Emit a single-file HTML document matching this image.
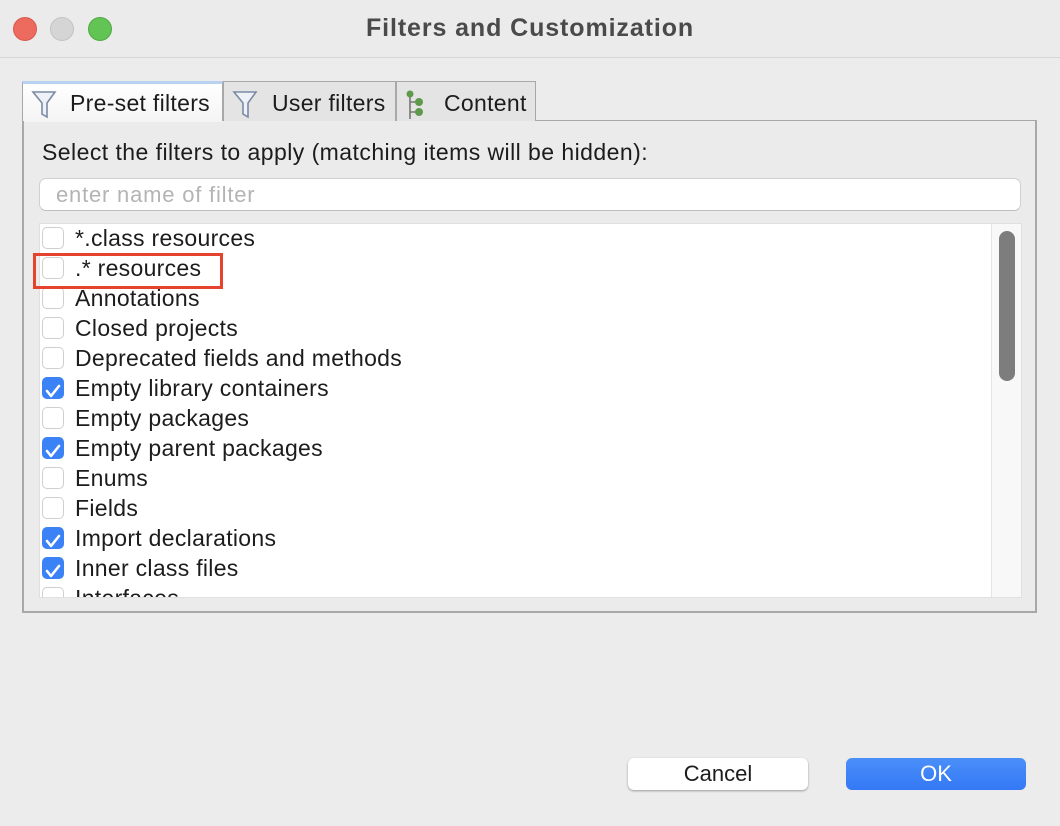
<!DOCTYPE html>
<html><head><style>
*{margin:0;padding:0;box-sizing:border-box}
body{width:1060px;height:826px;background:#ececec;font-family:"Liberation Sans",sans-serif;position:relative;overflow:hidden;color:#1c1c1c}
.abs{position:absolute}
.title{left:0;top:0;width:1060px;height:58px;background:#ebebeb;border-bottom:1px solid #d6d6d6;text-align:center;line-height:57px;font-weight:bold;font-size:25px;letter-spacing:0.9px;color:#4a4a4a}
.dot{width:24px;height:24px;border-radius:50%;top:17px}
.panel{left:22px;top:120px;width:1015px;height:493px;border:2px solid #a8a8a8;border-top:1px solid #a8a8a8;background:#ebebeb}
.tab{top:81px;height:40px;border:1px solid #a8a8a8;border-bottom:none;background:#e4e4e4;font-size:23px;letter-spacing:0.3px;line-height:42px}
.tab svg{position:absolute;left:8px;top:8px}
.tab span{position:absolute;top:0;white-space:nowrap}
.row{position:absolute;left:42px;height:30px;font-size:23px;letter-spacing:0.3px;line-height:31px}
.cb{position:absolute;left:0;top:4px;width:22px;height:22px;border:1px solid #cfcfcf;border-radius:5px;background:#fff}
.cb.on{background:#3b82f7;border-color:#3b82f7}
.row span{position:absolute;left:33px;white-space:nowrap}
</style></head><body>
<div class="abs title">Filters and Customization</div>
<div class="abs dot" style="left:13px;background:#ed6a5e;border:1px solid #d65a4f"></div>
<div class="abs dot" style="left:50px;background:#d5d5d5;border:1px solid #c3c3c3"></div>
<div class="abs dot" style="left:88px;background:#61c454;border:1px solid #52a945"></div>

<div class="abs panel"></div>
<div class="abs tab" style="left:22px;width:201px;background:linear-gradient(#fff,#f4f4f4);border-top:3px solid #b8d2f0">
<svg width="26" height="30" viewBox="0 0 26 30" style="top:6px"><path d="M2 2h22l-8 11v14l-5-3V13z" fill="#eef2f8" stroke="#7c8aa3" stroke-width="1.6"/></svg><span style="left:47px;top:-2px">Pre-set filters</span></div>
<div class="abs tab" style="left:223px;width:173px">
<svg width="26" height="30" viewBox="0 0 26 30"><path d="M2 2h22l-8 11v14l-5-3V13z" fill="#eef2f8" stroke="#7c8aa3" stroke-width="1.6"/></svg><span style="left:48px">User filters</span></div>
<div class="abs tab" style="left:396px;width:140px">
<svg width="26" height="30" viewBox="0 0 26 30"><path d="M5 3v26M5 12h6M5 22h6" stroke="#777" stroke-width="1.6" fill="none"/><circle cx="5" cy="4" r="3.5" fill="#5f9a4c"/><circle cx="14" cy="12" r="4" fill="#5f9a4c"/><circle cx="14" cy="22" r="4" fill="#5f9a4c"/></svg><span style="left:47px">Content</span></div>
<div class="abs" style="left:24px;top:120px;width:198px;height:2px;background:#f4f4f4"></div>

<div class="abs" style="left:42px;top:139px;font-size:23px;letter-spacing:0.45px;white-space:nowrap">Select the filters to apply (matching items will be hidden):</div>
<div class="abs" style="left:39px;top:178px;width:982px;height:33px;background:#fff;border:1px solid #d0d0d0;border-bottom-color:#bdbdbd;border-radius:7px;font-size:22px;letter-spacing:0.8px;color:#b4b4b4;line-height:31px;padding-left:16px">enter name of filter</div>

<div class="abs" style="left:39px;top:223px;width:983px;height:375px;background:#fff;border:1px solid #e0e0e0;overflow:hidden">
<div class="abs" style="left:951px;top:0;width:31px;height:375px;background:#f8f8f8;border-left:1px solid #e4e4e4"></div>
<div class="abs" style="left:959px;top:7px;width:16px;height:150px;background:#7d7d7d;border-radius:8px"></div>
</div>
<div class="abs" style="left:40px;top:224px;width:950px;height:373px;overflow:hidden">
<div style="position:relative;left:-40px;top:-224px">
<div class="row" style="top:223px"><div class="cb"></div><span>*.class resources</span></div>
<div class="row" style="top:253px"><div class="cb"></div><span>.* resources</span></div>
<div class="row" style="top:283px"><div class="cb"></div><span>Annotations</span></div>
<div class="row" style="top:313px"><div class="cb"></div><span>Closed projects</span></div>
<div class="row" style="top:343px"><div class="cb"></div><span>Deprecated fields and methods</span></div>
<div class="row" style="top:373px"><div class="cb on"><svg width="20" height="20" viewBox="0 0 20 20"><path d="M4 10l4 5 8-10" stroke="#fff" stroke-width="2.6" fill="none" stroke-linecap="round" stroke-linejoin="round"/></svg></div><span>Empty library containers</span></div>
<div class="row" style="top:403px"><div class="cb"></div><span>Empty packages</span></div>
<div class="row" style="top:433px"><div class="cb on"><svg width="20" height="20" viewBox="0 0 20 20"><path d="M4 10l4 5 8-10" stroke="#fff" stroke-width="2.6" fill="none" stroke-linecap="round" stroke-linejoin="round"/></svg></div><span>Empty parent packages</span></div>
<div class="row" style="top:463px"><div class="cb"></div><span>Enums</span></div>
<div class="row" style="top:493px"><div class="cb"></div><span>Fields</span></div>
<div class="row" style="top:523px"><div class="cb on"><svg width="20" height="20" viewBox="0 0 20 20"><path d="M4 10l4 5 8-10" stroke="#fff" stroke-width="2.6" fill="none" stroke-linecap="round" stroke-linejoin="round"/></svg></div><span>Import declarations</span></div>
<div class="row" style="top:553px"><div class="cb on"><svg width="20" height="20" viewBox="0 0 20 20"><path d="M4 10l4 5 8-10" stroke="#fff" stroke-width="2.6" fill="none" stroke-linecap="round" stroke-linejoin="round"/></svg></div><span>Inner class files</span></div>
<div class="row" style="top:583px"><div class="cb"></div><span>Interfaces</span></div>
</div></div>
<div class="abs" style="left:33px;top:253px;width:190px;height:36px;border:3px solid #e5432d"></div>

<div class="abs" style="left:628px;top:758px;width:180px;height:32px;background:#fff;border-radius:6px;box-shadow:0 1px 2px rgba(0,0,0,.35);text-align:center;line-height:32px;font-size:22px">Cancel</div>
<div class="abs" style="left:846px;top:758px;width:180px;height:32px;background:linear-gradient(#4a8ff8,#3478f6);border-radius:6px;text-align:center;line-height:32px;font-size:22px;color:#fff">OK</div>
</body></html>
